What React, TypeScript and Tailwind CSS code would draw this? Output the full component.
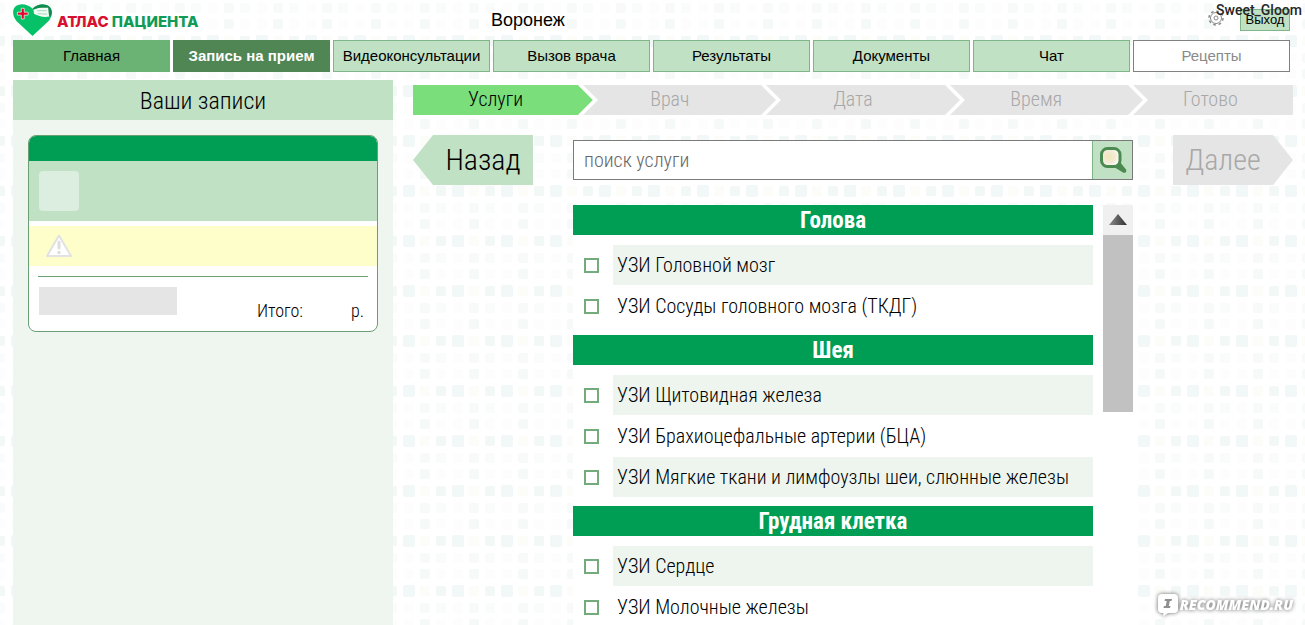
import React, { useRef, useState } from 'react';

const NAV = [
  'Главная',
  'Запись на прием',
  'Видеоконсультации',
  'Вызов врача',
  'Результаты',
  'Документы',
  'Чат',
  'Рецепты',
];

const STEPS = ['Услуги', 'Врач', 'Дата', 'Время', 'Готово'];

const GROUPS = [
  {
    title: 'Голова',
    items: ['УЗИ Головной мозг', 'УЗИ Сосуды головного мозга (ТКДГ)'],
  },
  {
    title: 'Шея',
    items: [
      'УЗИ Щитовидная железа',
      'УЗИ Брахиоцефальные артерии (БЦА)',
      'УЗИ Мягкие ткани и лимфоузлы шеи, слюнные железы',
    ],
  },
  {
    title: 'Грудная клетка',
    items: ['УЗИ Сердце', 'УЗИ Молочные железы'],
  },
];

// Pale mosaic of rounded squares that repeats over the whole page
function Mosaic() {
  return (
    <svg className="absolute inset-0 w-full h-full" aria-hidden="true">
      <defs>
        <pattern id="mosaic" x="11" y="35" width="49" height="50" patternUnits="userSpaceOnUse">
          <rect x="0" y="0" width="12" height="12" rx="2" fill="#f1f8f7" />
          <rect x="17" y="1" width="10" height="10" rx="2" fill="#fcfdf9" />
          <rect x="33" y="1" width="10" height="10" rx="2" fill="#f1f8f6" />
          <rect x="1" y="18" width="10" height="10" rx="2" fill="#fcfdfc" />
          <rect x="17" y="18" width="10" height="10" rx="2" fill="#f8fafa" />
          <rect x="33" y="18" width="10" height="10" rx="2" fill="#fafbfb" />
          <rect x="1" y="34" width="10" height="10" rx="2" fill="#fcfdfc" />
          <rect x="17" y="34" width="10" height="10" rx="2" fill="#f5faf9" />
          <rect x="33" y="34" width="10" height="10" rx="2" fill="#fcfdfc" />
        </pattern>
      </defs>
      <rect width="100%" height="100%" fill="url(#mosaic)" />
    </svg>
  );
}

function Logo() {
  return (
    <a href="#" className="flex items-center w-[478px]" aria-label="Атлас пациента">
      <svg width="40" height="34" viewBox="0 0 41 34" className="shrink-0">
        <path
          d="M20 33.500 L3.500 18 C-2 11 -1 1.500 8 1 C13 0.800 17 2.500 20 5.500 C23 2.500 27 0.800 31 1 C41 1.500 42 11 36.500 18 Z"
          fill="#06c167"
        />
        <path d="M20 5.500 C24 1 31 0 35 2 C40 4.500 41 10 38.500 14 C36 9.500 29 7 20 5.500 Z" fill="#12894f" />
        <path d="M21 6.500 C26 4 31 4.500 36 4.500 L37 13.500 C31 14.500 26 13 21.500 10.500 Z" fill="#f2fbf5" />
        <path d="M25 7.500 L34.500 7.500 M25.500 10.500 L35 11" stroke="#9ed8b7" strokeWidth="1" />
        <path d="M8.500 5 h3 v4 h4 v3 h-4 v4 h-3 v-4 h-4 v-3 h4 Z" fill="#e4002b" stroke="#fff" strokeWidth="0.700" />
      </svg>
      <span className="ml-1 pt-1 text-[15px] leading-5 font-extrabold whitespace-nowrap font-['Inter','Open_Sans',sans-serif]">
        <span className="text-[#d8102f]">АТЛАС</span> <span className="text-[#109c58]">ПАЦИЕНТА</span>
      </span>
    </a>
  );
}

function GearIcon() {
  return (
    <svg width="16" height="16" viewBox="0 0 16 16" fill="none" stroke="#8c8c8c">
      <circle cx="8" cy="8" r="7" strokeWidth="1.500" strokeDasharray="2.750 2.750" />
      <circle cx="8" cy="8" r="5.500" strokeWidth="1" />
      <circle cx="8" cy="8" r="2" strokeWidth="1" />
    </svg>
  );
}

function SearchIcon() {
  return (
    <svg width="28" height="28" viewBox="0 0 28 28">
      <defs>
        <radialGradient id="lens" cx="0.400" cy="0.450" r="0.600">
          <stop offset="0" stopColor="#efe6b8" />
          <stop offset="0.600" stopColor="#f3ebd8" />
          <stop offset="1" stopColor="#ffffff" />
        </radialGradient>
      </defs>
      <path d="M15 21 L21 16 L27 23.500 C28 26 26.500 27.500 24 26.500 Z" fill="#4b8a50" />
      <rect x="2.500" y="2.500" width="18.500" height="18" rx="6" fill="url(#lens)" stroke="#4b8a50" strokeWidth="3" />
    </svg>
  );
}

function StepArrow({ done }: { done: boolean }) {
  return (
    <svg className="absolute left-0 top-0" width="20" height="30" viewBox="0 0 20 30">
      <path d="M0 0 L15 15 L0 30 Z" fill={done ? '#7ade7a' : '#e5e5e5'} />
      <path d="M0 0 H5 L20 15 L5 30 H0 L15 15 Z" fill="#fff" />
    </svg>
  );
}

function Sidebar() {
  return (
    <aside className="w-[380px] shrink-0 bg-[#eef6ef]">
      <h2 className="h-10 bg-[#c1e1c5] text-center text-2xl leading-[42px] font-light">Ваши записи</h2>
      <div className="m-[15px] overflow-hidden rounded-lg border border-[#6a9f74] bg-white">
        <div className="h-[25px] bg-[#009e54]" />
        <div className="h-[60px] bg-[#c1e1c5] p-2.5">
          <div className="size-10 rounded bg-[#dbeedf]" />
        </div>
        <div className="mt-[5px] flex h-10 items-center bg-[#fefecb] pl-4">
          <svg width="28" height="24" viewBox="0 0 28 24">
            <path d="M14 1.500 L26 22 H2 Z" fill="#fff" stroke="#e2e2e2" strokeWidth="2" strokeLinejoin="round" />
            <path d="M14 8 V14" stroke="#dedede" strokeWidth="3" strokeLinecap="round" />
            <circle cx="14" cy="18.500" r="1.700" fill="#dedede" />
          </svg>
        </div>
        <div className="mx-[9px] mt-2.5 border-t border-[#6a9f74]" />
        <div className="flex h-[54px] px-2.5 pt-2.5 text-lg leading-7 font-light">
          <div className="h-7 w-[138px] bg-[#e5e5e5]" />
          <span className="ml-auto mt-2.5">Итого:</span>
          <span className="mt-2.5 w-16 pr-[3px] text-right">р.</span>
        </div>
      </div>
    </aside>
  );
}

export default function App() {
  const [query, setQuery] = useState('');
  const listRef = useRef<HTMLDivElement>(null);

  return (
    <div className="relative flex h-screen flex-col overflow-hidden bg-[#fefffe] pl-[13px] pr-3 text-black font-['Liberation_Sans_Narrow','Arial_Narrow','Roboto_Condensed',sans-serif]">
      <Mosaic />

      <header className="relative flex h-10 shrink-0 items-center pr-[3px] font-['Liberation_Sans',Arial,sans-serif]">
        <Logo />
        <span className="text-lg leading-5">Воронеж</span>
        <button type="button" className="ml-auto mr-4 -mt-1" aria-label="Настройки">
          <GearIcon />
        </button>
        <button
          type="button"
          className="flex h-[22px] w-[50px] items-end justify-center self-start mt-[9px] border border-[#7fb587] bg-[#c1e1c5] text-[13px] leading-5"
        >
          Выход
        </button>
      </header>

      <nav className="relative flex h-8 shrink-0 gap-[3px] pr-[3px] font-['Liberation_Sans',Arial,sans-serif]">
        {NAV.map((label, i) => {
          let look = 'border-[#7fb587] bg-[#c1e1c5]';
          if (i === 0) look = 'border-[#6bb374] bg-[#6bb374]';
          if (i === 1) look = 'border-[#4f8653] bg-[#4f8653] text-white font-bold';
          if (i === NAV.length - 1) look = 'border-[#808080] bg-white text-[#8a8a8a]';
          return (
            <a
              key={label}
              href="#"
              className={`flex min-w-0 flex-1 items-center justify-center border whitespace-nowrap text-[15px] ${look}`}
            >
              {label}
            </a>
          );
        })}
      </nav>

      <div className="relative mt-2 flex min-h-0 flex-1 gap-5">
        <Sidebar />

        <main className="flex min-w-0 flex-1 flex-col">
          <ol className="mt-[5px] grid shrink-0 grid-cols-[165fr_183fr_183fr_183fr_165fr] text-xl font-light leading-7">
            {STEPS.map((step, i) => (
              <li
                key={step}
                className={`relative h-[30px] text-center ${i === 0 ? 'bg-[#7ade7a]' : 'bg-[#e5e5e5] text-[#a8a8a8]'}`}
              >
                {i > 0 && <StepArrow done={i === 1} />}
                {step}
              </li>
            ))}
          </ol>

          <div className="mt-5 flex shrink-0 items-center gap-10">
            <button
              type="button"
              className="h-[50px] w-[120px] bg-[#c1e1c5] pl-5 text-3xl font-light [clip-path:polygon(20px_0,100%_0,100%_100%,20px_100%,0_50%)]"
            >
              Назад
            </button>
            <form className="flex h-10 min-w-0 flex-1 border border-[#7a7a7a] bg-white">
              <input
                type="text"
                aria-label="поиск услуги"
                placeholder="поиск услуги"
                value={query}
                onChange={e => setQuery(e.target.value)}
                className="min-w-0 flex-1 px-2.5 text-xl font-light outline-none placeholder:text-[#666666]"
              />
              <button
                type="button"
                aria-label="Найти"
                className="flex w-10 items-center justify-center border-l border-[#7fb587] bg-[#c1e1c5]"
              >
                <SearchIcon />
              </button>
            </form>
            <button
              type="button"
              disabled
              className="h-[50px] w-[120px] bg-[#e5e5e5] pr-5 text-3xl font-light text-[#a8a8a8] [clip-path:polygon(0_0,100px_0,100%_50%,100px_100%,0_100%)]"
            >
              Далее
            </button>
          </div>

          <div className="mx-40 mt-5 flex min-h-0 flex-1 gap-2.5 bg-white">
            <div ref={listRef} className="min-w-0 flex-1 overflow-y-auto [scrollbar-width:none]">
              {GROUPS.map(group => (
                <section key={group.title} className="pb-2">
                  <h3 className="mb-2.5 h-[30px] bg-[#009e54] text-center text-[23px] leading-8 font-bold text-white">
                    {group.title}
                  </h3>
                  {group.items.map((item, i) => (
                    <label key={item} className="mb-px flex h-10 items-center pl-[11px] text-xl font-light">
                      <input
                        type="checkbox"
                        className="mr-3.5 size-[15px] shrink-0 appearance-none border-2 border-[#74ab7c] bg-white checked:bg-[#74ab7c]"
                      />
                      <span
                        className={`flex h-10 min-w-0 flex-1 items-center pl-1 whitespace-nowrap ${i % 2 === 0 ? 'bg-[#eef5ef]' : ''}`}
                      >
                        {item}
                      </span>
                    </label>
                  ))}
                </section>
              ))}
            </div>

            <div className="w-[30px] shrink-0">
              <button
                type="button"
                aria-label="Вверх"
                onClick={() => listRef.current?.scrollBy({ top: -40 })}
                className="flex h-[30px] w-full items-center justify-center bg-[#f0f0f0]"
              >
                <svg width="18" height="12" viewBox="0 0 18 12">
                  <defs>
                    <linearGradient id="up" x1="0" x2="1">
                      <stop offset="0" stopColor="#8a8a8a" />
                      <stop offset="1" stopColor="#303030" />
                    </linearGradient>
                  </defs>
                  <path d="M9 0 L18 11 H0 Z" fill="url(#up)" />
                </svg>
              </button>
              <div className="h-[177px] bg-[#c1c1c1]" />
            </div>
          </div>
        </main>
      </div>

      <span className="absolute right-[3px] top-0 text-sm leading-5 font-medium text-[#262626] font-['Roboto',sans-serif]">
        Sweet_Gloom
      </span>

      <div className="absolute bottom-2 right-3 flex items-center gap-px drop-shadow-[0_0_2px_rgba(0,0,0,0.6)]">
        <svg width="22" height="24" viewBox="0 0 22 24">
          <path
            d="M5 1 H17 Q21 1 21 5 V16 Q21 20 17 20 H11 L6 23.500 L6.500 20 H5 Q1 20 1 16 V5 Q1 1 5 1 Z"
            fill="#fff"
          />
          <path d="M8 6 H15 L14.500 8 H12.800 L11.800 13 H13.500 L13 15 H6.500 L7 13 H8.700 L9.700 8 H7.500 Z" fill="#8f8f8f" />
        </svg>
        <span className="text-sm leading-5 font-extrabold italic text-white font-['Open_Sans',sans-serif]">
          RECOMMEND.RU
        </span>
      </div>
    </div>
  );
}
